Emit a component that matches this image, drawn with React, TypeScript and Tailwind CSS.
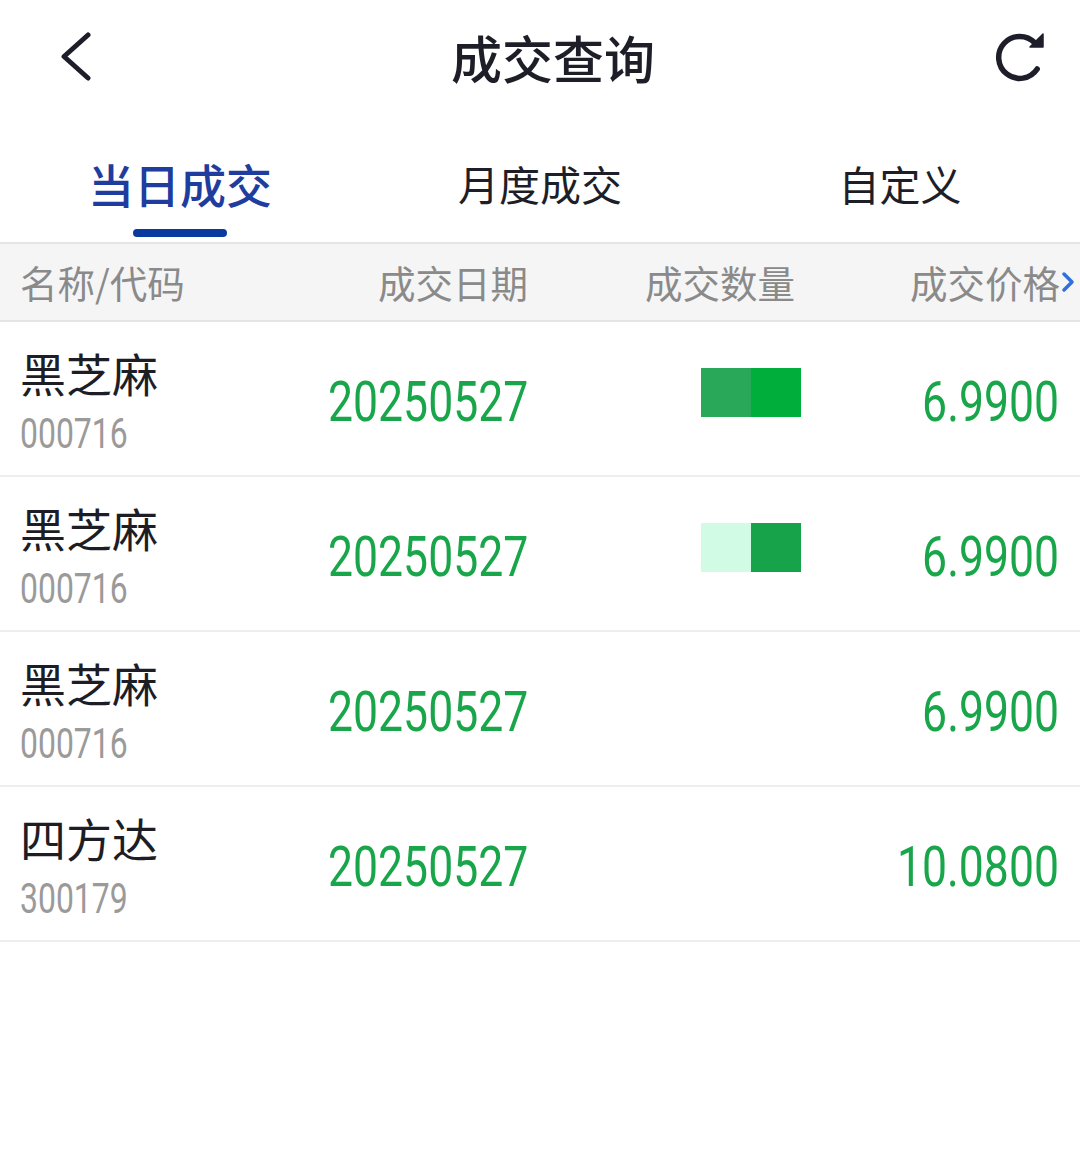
import React from "react";

const cjk = { fontFamily: '"Noto Sans CJK SC", "Noto Sans", sans-serif' };
const num = { fontFamily: 'Roboto, "Liberation Sans", sans-serif' };

type Row = { name: string; code: string; date: string; price: string; q?: [string, string] };

const rows: Row[] = [
  { name: "黑芝麻", code: "000716", date: "20250527", price: "6.9900", q: ["#2aa85a", "#00ae3c"] },
  { name: "黑芝麻", code: "000716", date: "20250527", price: "6.9900", q: ["#d2fbe6", "#17a34a"] },
  { name: "黑芝麻", code: "000716", date: "20250527", price: "6.9900" },
  { name: "四方达", code: "300179", date: "20250527", price: "10.0800" },
];

export default function App() {
  return (
    <div className="w-[1080px] h-[1164px] bg-white overflow-hidden" style={cjk}>
      {/* top bar */}
      <div className="h-[114px] grid grid-cols-[1fr_auto_1fr] items-center">
        <div className="flex">
          <svg className="ml-[56px]" width="40" height="50" viewBox="0 0 40 50" fill="none">
            <path d="M32 3 L8 24.5 L32 46" stroke="#1e1e2a" strokeWidth="5" strokeLinecap="round" strokeLinejoin="round" />
          </svg>
        </div>
        <div className="pl-[26px] text-[51px] leading-none font-medium text-[#1e1e28]">成交查询</div>
        <div className="flex justify-end">
          <svg className="mr-[30px]" width="60" height="60" viewBox="0 0 60 60" fill="none">
            <path d="M45 16 A21 21 0 1 0 47.2 42" stroke="#1e1e2a" strokeWidth="5.5" strokeLinecap="round" />
            <path d="M53 7 L53 20 L40 20 Z" fill="#1e1e2a" stroke="#1e1e2a" strokeWidth="1.5" strokeLinejoin="round" />
          </svg>
        </div>
      </div>

      {/* tabs */}
      <div className="h-[128px] grid grid-cols-3">
        <div className="flex flex-col items-center pt-[46px]">
          <div className="h-[46px] flex items-center text-[46px] leading-none font-medium text-[#1f3d9e]">当日成交</div>
          <div className="mt-[23px] h-[8px] w-[94px] rounded-full bg-[#0b3a9e]" />
        </div>
        <div className="flex flex-col items-center pt-[46px]">
          <div className="h-[46px] flex items-center text-[41px] leading-none text-[#1e1e28]">月度成交</div>
        </div>
        <div className="flex flex-col items-center pt-[46px]">
          <div className="h-[46px] flex items-center text-[41px] leading-none text-[#1e1e28]">自定义</div>
        </div>
      </div>

      {/* table header */}
      <div className="h-[80px] grid grid-cols-4 items-center bg-[#f5f5f5] border-y-2 border-[#e4e4e4] text-[37.5px] leading-none text-[#8a8a8a]">
        <div className="pl-[20px]">名称/代码</div>
        <div className="flex justify-end pr-[12px]">成交日期</div>
        <div className="flex justify-end pr-[15px]">成交数量</div>
        <div className="flex justify-end items-center pr-[5px]">
          <span>成交价格</span>
          <svg width="14" height="24" viewBox="0 0 14 24" fill="none" className="ml-[1px]">
            <path d="M3 4 L11 12 L3 20" stroke="#2f6fe0" strokeWidth="3.5" strokeLinecap="round" strokeLinejoin="round" />
          </svg>
        </div>
      </div>

      {/* rows */}
      {rows.map((r, i) => (
        <div key={i} className="h-[155px] grid grid-cols-4 border-b-2 border-[#eeeeee]">
          <div className="pl-[20px] pt-[27px] flex flex-col">
            <div className="h-[46px] flex items-center text-[46px] leading-none text-[#1d1d26]">{r.name}</div>
            <div className="mt-[19px] h-[40px] flex items-center text-[42px] leading-none text-[#9a9a9a] scale-x-[0.76] origin-left" style={num}>{r.code}</div>
          </div>
          <div className="flex justify-end items-start pt-[53px] pr-[12px]">
            <div className="h-[54px] flex items-center text-[55px] leading-none text-[#19a64a] scale-x-[0.81] origin-right" style={num}>{r.date}</div>
          </div>
          <div className="flex justify-end items-start pt-[46px] pr-[9px]">
            {r.q && (
              <div className="flex h-[49px]">
                <div className="w-[50px] h-full" style={{ backgroundColor: r.q[0] }} />
                <div className="w-[50px] h-full" style={{ backgroundColor: r.q[1] }} />
              </div>
            )}
          </div>
          <div className="flex justify-end items-start pt-[53px] pr-[21px]">
            <div className="h-[54px] flex items-center text-[55px] leading-none text-[#19a64a] scale-x-[0.81] origin-right" style={num}>{r.price}</div>
          </div>
        </div>
      ))}
    </div>
  );
}
